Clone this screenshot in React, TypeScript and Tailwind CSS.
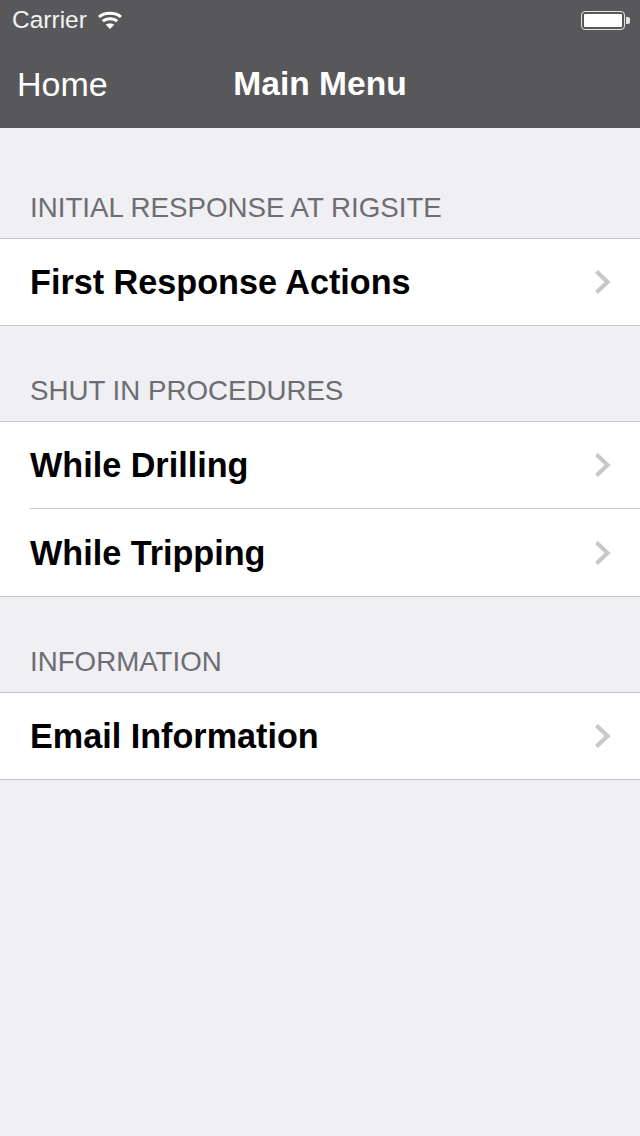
import React from 'react';

const SECTIONS = [
  { title: 'INITIAL RESPONSE AT RIGSITE', rows: ['First Response Actions'] },
  { title: 'SHUT IN PROCEDURES', rows: ['While Drilling', 'While Tripping'] },
  { title: 'INFORMATION', rows: ['Email Information'] },
];

function Chevron() {
  return (
    <svg width="18" height="26" viewBox="0 0 18 26" fill="none" className="shrink-0">
      <path d="M2.5 2.5 L13.5 13 L2.5 23.5" stroke="#c7c7cc" strokeWidth="4.2" />
    </svg>
  );
}

function Wifi() {
  return (
    <svg width="24" height="18" viewBox="0 0 24 18" fill="none">
      <path d="M1 6 C6.5 1 17.5 1 23 6" stroke="#fff" strokeWidth="3" />
      <path d="M4.8 10.2 C8.5 6.8 15.5 6.8 19.2 10.2" stroke="#fff" strokeWidth="3" />
      <path d="M12 18 L7.6 13.6 C10 12 14 12 16.4 13.6 Z" fill="#fff" />
    </svg>
  );
}

function Battery() {
  return (
    <div className="flex items-center">
      <div className="w-[44px] h-[19px] rounded-[4px] border border-[#e4e4e4] p-[2px]">
        <div className="w-full h-full rounded-[1px] bg-white" />
      </div>
      <div className="w-[4px] h-[7px] ml-px rounded-r-[2px] bg-[#e4e4e4]" />
    </div>
  );
}

export default function App() {
  return (
    <div className="w-[640px] h-[1136px] bg-[#efeff4] font-['Liberation_Sans',Arial,sans-serif]">
      <div className="h-[128px] bg-[#58585a] text-white">
        <div className="h-[40px] flex items-center justify-between pl-[12px] pr-[10px]">
          <div className="flex items-center gap-[11px]">
            <span className="text-[24.5px] leading-none text-[#f2f2f2]">Carrier</span>
            <Wifi />
          </div>
          <Battery />
        </div>
        <div className="relative h-[88px] flex items-center justify-center">
          <span className="absolute left-[17px] top-[24px] text-[34px] leading-[40px]">Home</span>
          <span className="text-[33.6px] leading-[40px] font-bold">Main Menu</span>
        </div>
      </div>
      <div className="pt-[62px]">
        {SECTIONS.map((section) => (
          <div key={section.title} className="mb-[47px]">
            <div className="h-[48px] pl-[30px] text-[27.7px] leading-[36px] text-[#6d6d72]">{section.title}</div>
            <div className="bg-white border-y border-[#c8c7cc]">
              {section.rows.map((row, i) => (
                <div key={row} className={i > 0 ? 'pl-[30px]' : ''}>
                  <div className={i > 0 ? 'border-t border-[#c8c7cc]' : ''}>
                    <div className={`flex items-center justify-between pr-[28px] ${i > 0 ? 'h-[87px]' : 'h-[86px] pl-[30px]'}`}>
                      <span className="text-[34.2px] leading-[40px] font-bold text-black">{row}</span>
                      <Chevron />
                    </div>
                  </div>
                </div>
              ))}
            </div>
          </div>
        ))}
      </div>
    </div>
  );
}
